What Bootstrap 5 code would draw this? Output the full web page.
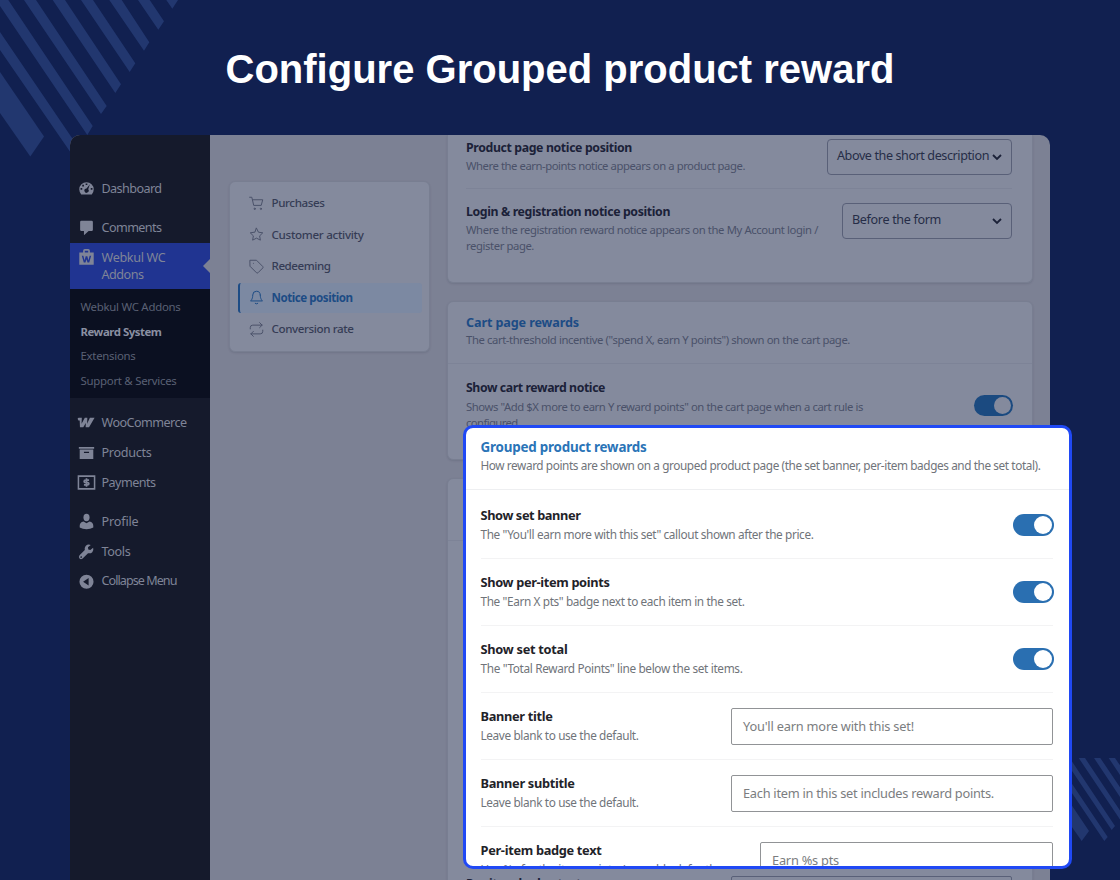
<!DOCTYPE html>
<html lang="en">
<head>
    <meta charset="utf-8">
    <title>Configure Grouped product reward</title>
    <link href="https://cdn.jsdelivr.net/npm/bootstrap@5.3.3/dist/css/bootstrap.min.css" rel="stylesheet">
    <style>
        body { background: #112050; font-family: "Noto Sans", "Open Sans", sans-serif; font-size: 12px; color: #4a5169; }
        .stage { width: 1120px; height: 880px; }
        .stripes { top: 0; left: 0; }
        .headline { height: 135px; padding-top: 45px; font: 700 40px/48px "Liberation Sans", sans-serif; color: #fff; }
        .window { width: 980px; height: 745px; margin-left: 70px; background: #7c8194; border-radius: 10px 10px 0 0; }
        [data-width] { display: inline-block; white-space: nowrap; }

        /* left admin menu */
        .sidebar { width: 140px; padding-top: 38px; background: #151a2c; color: #7f8497; font-size: 12.6px; }
        .side-item { height: 30px; padding-left: 7.5px; gap: 7px; }
        .side-item span { padding-top: 2px; }
        .side-item svg, .side-active svg { width: 17px; height: 17px; flex: none; fill: currentColor; }
        .side-active { height: 46px; padding: 6px 0 0 7.5px; gap: 7px; background: #203491; line-height: 17px; }
        .side-active::after { content: ""; position: absolute; right: 0; top: 16px; border: 7px solid transparent; border-right-color: #7c8194; border-left: 0; }
        .side-sub { height: 109px; padding: 6.5px 0 0 10.5px; background: #0b1021; font-size: 11.4px; line-height: 24.5px; color: #5a6074; }
        .side-sub .current { color: #8a8fa2; font-weight: 700; }
        .side-gap { height: 9.5px; }

        /* settings tabs */
        .tabs { width: 201px; height: 171px; margin: 45.5px 0 0 19px; padding: 6.5px 7px 0 7.5px; gap: 1.5px; }
        .panel { background: #848a9d; border: 1px solid #787e91; border-radius: 6px; box-shadow: 0 1px 2px rgba(40, 46, 70, .15); }
        .tab-item { height: 30px; flex: none; padding-left: 11px; gap: 8px; color: #353c55; font-size: 11.6px; font-weight: 500; border-radius: 3px; }
        .tab-item svg { width: 15px; height: 15px; fill: none; stroke: #4b526a; stroke-width: 1.6; stroke-linecap: round; stroke-linejoin: round; }
        .tab-item.on { padding-left: 9px; background: #7c89a2; border-left: 2px solid #1d4c85; color: #1d4c85; font-weight: 700; }
        .tab-item.on svg { stroke: #1d4c85; }

        /* dimmed panels */
        .panels { width: 586px; margin-left: 16.5px; gap: 18px; }
        .panels .panel { width: 586px; flex: none; }
        .panels .panel-top { height: 148px; border-top: 0; border-top-left-radius: 0; border-top-right-radius: 0; }
        .panel-cart { height: 159px; }
        .panel-next { height: 480px; }
        .panel-head { height: 62px; padding: 12px 0 0 18.5px; }
        .panel-head .opt-help { padding-top: 0; }
        .skip { height: 321px; }
        .opt { margin: 0 19.5px 0 18.5px; }
        .row-product { height: 54px; padding-top: 4px; }
        .row-login { padding-top: 14px; }
        .row-cart { padding-top: 15px; }
        .opt-name { font-size: 12.3px; line-height: 18px; font-weight: 700; color: #1b2138; }
        .opt-help { font-size: 11.3px; line-height: 16px; padding-top: 1px; }
        .row-cart .opt-help { padding-top: 2px; }
        .sep { border-bottom: 1px solid #7d8397; }
        .blue-title { font-size: 12.6px; line-height: 18px; font-weight: 700; color: #1d4c85; }
        .picker { width: 170px; height: 36px; padding: 0 9px; border: 1.5px solid #596078; border-radius: 4px; color: #262d47; font-size: 12.6px; line-height: 32px; }
        .picker.wide { width: 185px; }
        .picker span { margin-top: -2px; }
        .picker svg { width: 10px; height: 7px; margin-top: 1px; fill: none; stroke: #1b2138; stroke-width: 1.8; }
        .pill { width: 39px; height: 21px; padding: 2px; background: #1b4a80; border-radius: 11px; }
        .pill i { width: 17px; height: 17px; border-radius: 50%; background: #848a9d; }
        .row-cart .pill { margin: 16px -1px 0 0; }
        .field { width: 322px; height: 37px; padding: 0 11px; border: 1px solid #919396; border-radius: 2px; font-size: 12.8px; line-height: 35px; color: #7b7d80; }
        .field.short { width: 293px; }
        .panels .field { width: 281px; height: 36px; border-color: #596078; margin-top: 14px; }
        .row-badge .opt-name { padding-top: 13px; }

        /* highlighted panel */
        .spot { left: 462.5px; top: 425px; width: 609px; height: 444px; background: #fff; border: 3px solid #2049f5; border-radius: 10px; color: #70747a; }
        .spot-head { height: 62px; padding: 10px 0 0 15px; border-bottom: 1px solid #eeeff1; }
        .spot .blue-title { font-size: 13.4px; color: #2a74b7; }
        .spot .opt { height: 67px; margin: 0 15.5px 0 15px; border-bottom: 1px solid #f3f3f4; }
        .spot .opt-name { font-size: 12.8px; line-height: 20px; margin-top: 13px; color: #1f2329; }
        .spot .opt-help { font-size: 11.8px; line-height: 19px; padding-top: 0; }
        .spot .pill { width: 41px; height: 22px; margin: 22px -1px 0 0; background: #2a6fb1; }
        .spot .pill i { width: 18px; height: 18px; background: #fff; }
        .spot .field { margin-top: 14.5px; }
        .spot .tall { height: 69px; padding-top: 2px; }
        .spot .tall .opt-name { margin-top: 12.5px; }
    </style>
</head>
<body>
<main class="stage position-relative overflow-hidden">
    <svg class="stripes position-absolute" width="1120" height="880" fill="#22376f">
        <path d="M0 72L44 136.500L30.300 156.500L0 113z"/>
        <path d="M0 32L78.300 147.300L73 156L0 50zM8.300 0L92.700 126L87.300 135L-4 0zM36 0L106.700 106L101 114L24 0zM65 0L121 84.300L115.300 93L52.700 0zM93 0L135.300 63.300L129.700 72L81 0zM121.700 0L149.300 42.300L144 50.700L109.300 0zM149.700 0L164 21.300L158.300 29.700L138 0zM178 0L172.300 8.700L166.300 0z"/>
        <path d="M1030 746L1040 758L1089 831L1081.700 841L1030 767zM1054.700 758L1107.700 837L1104.300 841L1048.300 758zM1069.700 758L1115 826L1111.700 830L1063.300 758zM1085 758L1129 824L1125 827L1078.700 758zM1100.300 758L1140 817L1136 821L1094 758zM1115 758L1130 780L1126 784L1108.700 758z"/>
    </svg>
    <h1 class="headline text-center mb-0 position-relative">Configure Grouped product reward</h1>

    <div class="window d-flex overflow-hidden position-relative">
        <!-- Admin menu -->
        <nav class="sidebar flex-shrink-0">
            <div class="side-item d-flex align-items-center">
                <svg viewBox="0 0 20 20"><path fill-rule="evenodd" d="M3.800 17A8.500 8.500 0 1 1 16.200 17zM9 4v2h2V4zM5 5.500v2h2v-2zM3 9.500v2h2v-2zM15 9.500v2h2v-2zM14 5l-4 5a2.500 2.500 0 1 0 2 1z"/></svg>
                <span data-width="60">Dashboard</span>
            </div>
            <div class="side-gap"></div>
            <div class="side-item d-flex align-items-center">
                <svg viewBox="0 0 20 20"><path d="M4 2h12q1.500 0 1.500 1.500v9q0 1.500-1.500 1.500h-3.500L7 19v-5H4q-1.500 0-1.500-1.500v-9Q2.500 2 4 2z"/></svg>
                <span data-width="60">Comments</span>
            </div>
            <div class="side-active d-flex position-relative">
                <svg viewBox="0 0 20 20"><path fill-rule="evenodd" d="M1.500 4H6V2q0-2 2-2h4q2 0 2 2v2h4.500v14.500h-17zM8 4h4V2H8zM4.500 8l2.300 8h2L10 12l1.200 4h2l2.300-8h-1.800l-1.500 5.500L11 8.500H9l-1.200 5L6.300 8z"/></svg>
                <div>
                    <span data-width="64">Webkul WC</span><br>
                    <span data-width="42">Addons</span>
                </div>
            </div>
            <div class="side-sub">
                <div><span data-width="100">Webkul WC Addons</span></div>
                <div class="current"><span data-width="81">Reward System</span></div>
                <div><span data-width="55">Extensions</span></div>
                <div><span data-width="96">Support &amp; Services</span></div>
            </div>
            <div class="side-gap"></div>
            <div class="side-item d-flex align-items-center">
                <svg viewBox="0 0 20 20" overflow="visible"><path d="M1 4.500h3.500l-.3 7L8 4.500h3l-.3 7 3.300-7h5.500l-6.500 11H9l.2-5-3 5H2.300L2 7.500H.5q-2-3 .5-3z"/></svg>
                <span data-width="85">WooCommerce</span>
            </div>
            <div class="side-item d-flex align-items-center">
                <svg viewBox="0 0 20 20"><path fill-rule="evenodd" d="M1 3.500h18v2H1zM2 6.500h16v11H2zM7 9v1.500h6V9z"/></svg>
                <span data-width="50">Products</span>
            </div>
            <div class="side-item d-flex align-items-center">
                <svg viewBox="0 0 20 20" overflow="visible"><path fill="none" stroke="currentColor" stroke-width="1.800" d="M.5 2.500h19v15H.5z"/><path fill="none" stroke="currentColor" stroke-width="2" d="M13 7.300H9q-1.800 0-1.800 1.400T9 10.100h2q1.800 0 1.800 1.400T11 12.900H7M10 5v10"/></svg>
                <span data-width="54">Payments</span>
            </div>
            <div class="side-gap"></div>
            <div class="side-item d-flex align-items-center">
                <svg viewBox="0 0 20 20"><ellipse cx="10" cy="5.300" rx="3.600" ry="4.300"/><path d="M6.500 10l3.500 2 3.500-2q4.500 1 4.500 5v2q-3.500 2-8 2t-8-2v-2q0-4 4.500-5z"/></svg>
                <span data-width="37">Profile</span>
            </div>
            <div class="side-item d-flex align-items-center">
                <svg viewBox="0 0 20 20"><path d="M17.800 5.500l-3.300 2.600-2.400-.6-.4-2.400L15 2.300Q11.800.8 9 3.400 7.300 5.600 8 8.300l-6.200 6.200q-1.600 2 0 3.700t3.700 0L11.800 12q3 .7 5-1.200t1-5.300zM3.700 17.500a1 1 0 1 1 .1-2 1 1 0 0 1-.1 2z"/></svg>
                <span data-width="29">Tools</span>
            </div>
            <div class="side-item d-flex align-items-center">
                <svg viewBox="0 0 20 20"><path fill-rule="evenodd" d="M10 2a8.300 8.300 0 1 1 0 16.600A8.300 8.300 0 0 1 10 2zM12.500 6L6 10.300l6.500 4.300z"/></svg>
                <span class="pt-0" data-width="75">Collapse Menu</span>
            </div>
        </nav>

        <!-- Settings tabs -->
        <div class="tabs panel d-flex flex-column flex-shrink-0">
            <div class="tab-item d-flex align-items-center">
                <svg viewBox="0 0 24 24"><path d="M1 2h3.500l3 13h12L22 6H6"/><circle cx="9" cy="20.500" r="1"/><circle cx="19" cy="20.500" r="1"/></svg>
                <span data-width="53">Purchases</span>
            </div>
            <div class="tab-item d-flex align-items-center">
                <svg viewBox="0 0 24 24"><path d="M12 2l3.100 6.300 6.900 1-5 4.900 1.200 6.800-6.200-3.200L5.800 21 7 14.200 2 9.300l6.900-1z"/></svg>
                <span data-width="92">Customer activity</span>
            </div>
            <div class="tab-item d-flex align-items-center">
                <svg viewBox="0 0 24 24"><path d="M2 2h10l10 10q1 1.200 0 2.400L14.400 22q-1.200 1-2.400 0L2 12zM7 7h.01"/></svg>
                <span data-width="59">Redeeming</span>
            </div>
            <div class="tab-item on d-flex align-items-center">
                <svg viewBox="0 0 24 24"><path d="M18 8A6 6 0 0 0 6 8c0 7-3.500 9.500-3.500 9.500h19S18 15 18 8M10 21.500q2 1.500 4 0"/></svg>
                <span data-width="81">Notice position</span>
            </div>
            <div class="tab-item d-flex align-items-center">
                <svg viewBox="0 0 24 24"><path d="M17 1l4 4-4 4M2 11V9q0-4 4-4h15M7 23l-4-4 4-4M22 13v2q0 4-4 4H3"/></svg>
                <span data-width="82">Conversion rate</span>
            </div>
        </div>

        <!-- Dimmed settings -->
        <div class="panels d-flex flex-column flex-shrink-0">
            <section class="panel panel-top">
                <div class="opt row-product sep d-flex justify-content-between">
                    <div>
                        <div class="opt-name"><span data-width="166">Product page notice position</span></div>
                        <div class="opt-help"><span data-width="279">Where the earn-points notice appears on a product page.</span></div>
                    </div>
                    <div class="picker wide d-flex align-items-center justify-content-between">
                        <span data-width="152">Above the short description</span>
                        <svg viewBox="0 0 10 7"><path d="M1 1l4 4 4-4"/></svg>
                    </div>
                </div>
                <div class="opt row-login d-flex justify-content-between">
                    <div>
                        <div class="opt-name"><span data-width="204">Login &amp; registration notice position</span></div>
                        <div class="opt-help">
                            <span data-width="352">Where the registration reward notice appears on the My Account login /</span><br>
                            <span data-width="68">register page.</span>
                        </div>
                    </div>
                    <div class="picker d-flex align-items-center justify-content-between">
                        <span data-width="89">Before the form</span>
                        <svg viewBox="0 0 10 7"><path d="M1 1l4 4 4-4"/></svg>
                    </div>
                </div>
            </section>

            <section class="panel panel-cart">
                <div class="panel-head sep">
                    <div class="blue-title"><span data-width="113">Cart page rewards</span></div>
                    <div class="opt-help"><span data-width="384">The cart-threshold incentive ("spend X, earn Y points") shown on the cart page.</span></div>
                </div>
                <div class="opt row-cart d-flex justify-content-between">
                    <div>
                        <div class="opt-name"><span data-width="139">Show cart reward notice</span></div>
                        <div class="opt-help">
                            <span data-width="397">Shows "Add $X more to earn Y reward points" on the cart page when a cart rule is</span><br>
                            <span data-width="54">configured.</span>
                        </div>
                    </div>
                    <div class="pill d-flex justify-content-end"><i></i></div>
                </div>
            </section>

            <section class="panel panel-next">
                <div class="panel-head sep"></div>
                <div class="skip"></div>
                <div class="opt row-badge d-flex justify-content-between">
                    <div class="opt-name"><span data-width="115">Per-item badge text</span></div>
                    <div class="field"></div>
                </div>
            </section>
        </div>
    </div>

    <!-- Highlighted settings -->
    <section class="spot position-absolute overflow-hidden">
        <div class="spot-head">
            <div class="blue-title"><span data-width="166">Grouped product rewards</span></div>
            <div class="opt-help"><span data-width="560">How reward points are shown on a grouped product page (the set banner, per-item badges and the set total).</span></div>
        </div>
        <div class="opt tall d-flex justify-content-between">
            <div>
                <div class="opt-name"><span data-width="100">Show set banner</span></div>
                <div class="opt-help"><span data-width="333">The "You'll earn more with this set" callout shown after the price.</span></div>
            </div>
            <div class="pill d-flex justify-content-end"><i></i></div>
        </div>
        <div class="opt d-flex justify-content-between">
            <div>
                <div class="opt-name"><span data-width="129">Show per-item points</span></div>
                <div class="opt-help"><span data-width="264">The "Earn X pts" badge next to each item in the set.</span></div>
            </div>
            <div class="pill d-flex justify-content-end"><i></i></div>
        </div>
        <div class="opt d-flex justify-content-between">
            <div>
                <div class="opt-name"><span data-width="87">Show set total</span></div>
                <div class="opt-help"><span data-width="262">The "Total Reward Points" line below the set items.</span></div>
            </div>
            <div class="pill d-flex justify-content-end"><i></i></div>
        </div>
        <div class="opt d-flex justify-content-between">
            <div>
                <div class="opt-name"><span data-width="72">Banner title</span></div>
                <div class="opt-help"><span data-width="158">Leave blank to use the default.</span></div>
            </div>
            <div class="field"><span data-width="171">You'll earn more with this set!</span></div>
        </div>
        <div class="opt d-flex justify-content-between">
            <div>
                <div class="opt-name"><span data-width="94">Banner subtitle</span></div>
                <div class="opt-help"><span data-width="158">Leave blank to use the default.</span></div>
            </div>
            <div class="field"><span data-width="251">Each item in this set includes reward points.</span></div>
        </div>
        <div class="opt d-flex justify-content-between">
            <div>
                <div class="opt-name"><span data-width="121">Per-item badge text</span></div>
                <div class="opt-help"><span data-width="242">Use %s for the item points. Leave blank for the</span></div>
            </div>
            <div class="field short"><span data-width="67">Earn %s pts</span></div>
        </div>
    </section>
</main>
<script src="https://cdn.jsdelivr.net/npm/bootstrap@5.3.3/dist/js/bootstrap.bundle.min.js"></script>
<script>
    // Track each label so it fills its data-width
    document.querySelectorAll('[data-width]').forEach(el => {
        const natural = el.getBoundingClientRect().width;
        el.style.letterSpacing = (el.dataset.width - natural) / el.textContent.length + 'px';
    });
</script>
</body>
</html>
